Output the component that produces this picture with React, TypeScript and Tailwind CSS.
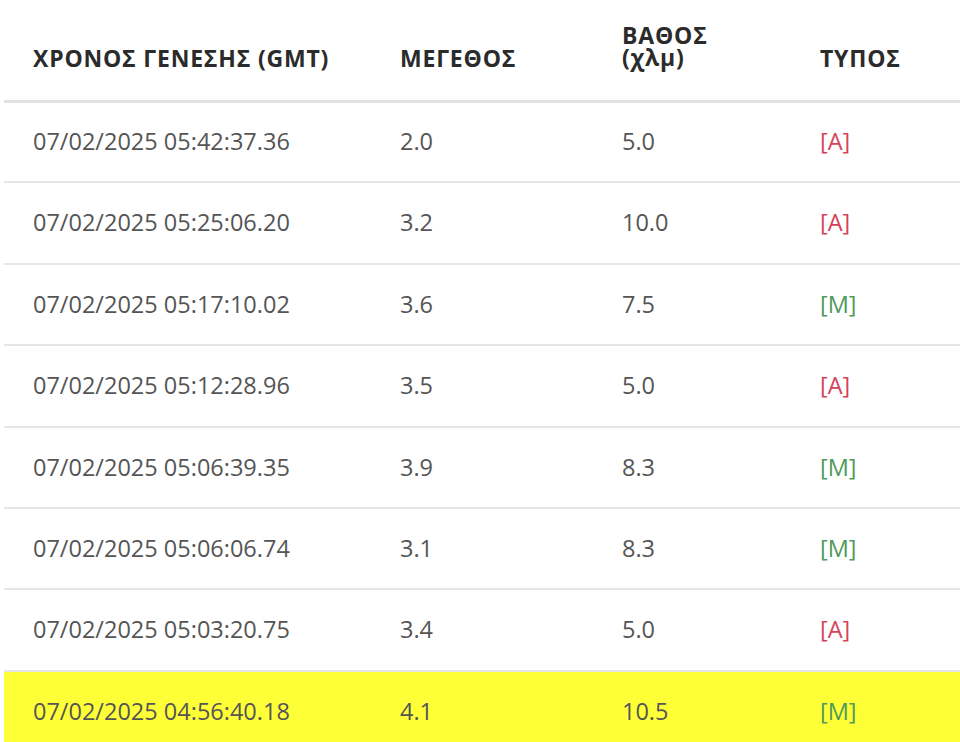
import React from "react";

type Quake = {
  time: string;
  mag: string;
  depth: string;
  type: "A" | "M";
  highlight?: boolean;
};

const rows: Quake[] = [
  { time: "07/02/2025 05:42:37.36", mag: "2.0", depth: "5.0", type: "A" },
  { time: "07/02/2025 05:25:06.20", mag: "3.2", depth: "10.0", type: "A" },
  { time: "07/02/2025 05:17:10.02", mag: "3.6", depth: "7.5", type: "M" },
  { time: "07/02/2025 05:12:28.96", mag: "3.5", depth: "5.0", type: "A" },
  { time: "07/02/2025 05:06:39.35", mag: "3.9", depth: "8.3", type: "M" },
  { time: "07/02/2025 05:06:06.74", mag: "3.1", depth: "8.3", type: "M" },
  { time: "07/02/2025 05:03:20.75", mag: "3.4", depth: "5.0", type: "A" },
  { time: "07/02/2025 04:56:40.18", mag: "4.1", depth: "10.5", type: "M", highlight: true },
];

const th =
  "pl-[29px] text-left align-bottom text-[23px] font-bold tracking-[0.8px] text-[#2b2b2b]";
const td = "pl-[29px] align-middle text-[23.5px] text-[#555555]";

export default function App() {
  return (
    <div className="h-[742px] w-[960px] overflow-hidden bg-white pl-[4px] font-['Open_Sans',sans-serif]">
      <table className="w-[1000px] table-fixed border-collapse">
        <colgroup>
          <col className="w-[367px]" />
          <col className="w-[222px]" />
          <col className="w-[198px]" />
          <col />
        </colgroup>
        <thead>
          <tr className="border-b-[3px] border-[#e2e2e2]">
            <th className={`h-[101px] pb-[30px] leading-[23px] ${th}`}>ΧΡΟΝΟΣ ΓΕΝΕΣΗΣ (GMT)</th>
            <th className={`pb-[30px] leading-[23px] ${th}`}>ΜΕΓΕΘΟΣ</th>
            <th className={`pb-[32px] leading-[22px] ${th}`}>
              <div>ΒΑΘΟΣ</div>
              <div>(χλμ)</div>
            </th>
            <th className={`pb-[30px] leading-[23px] ${th}`}>ΤΥΠΟΣ</th>
          </tr>
        </thead>
        <tbody>
          {rows.map((r) => (
            <tr
              key={r.time}
              className={
                r.highlight
                  ? "border-b-2 border-[#e6e6e6] bg-[#ffff38]"
                  : "border-b-2 border-[#e6e6e6]"
              }
            >
              <td className={`h-[81.4px] ${td}`}>{r.time}</td>
              <td className={td}>{r.mag}</td>
              <td className={td}>{r.depth}</td>
              <td
                className={
                  r.type === "A"
                    ? "pl-[29px] align-middle text-[23.5px] text-[#d4435c]"
                    : "pl-[29px] align-middle text-[23.5px] text-[#4f9a5c]"
                }
              >
                [{r.type}]
              </td>
            </tr>
          ))}
        </tbody>
      </table>
    </div>
  );
}
